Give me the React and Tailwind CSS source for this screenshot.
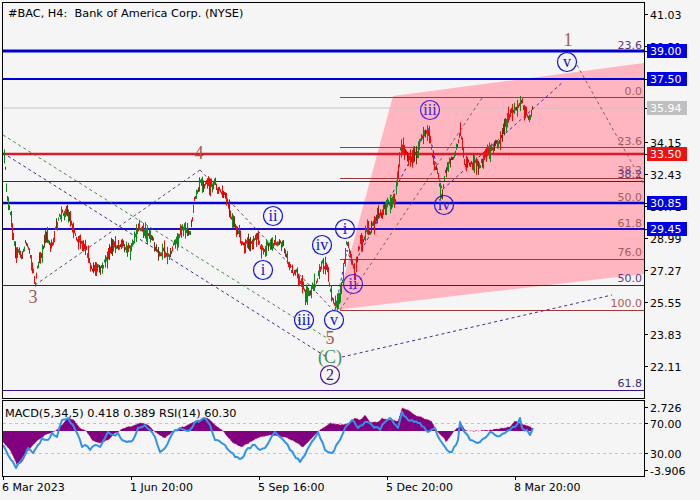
import React from 'react';

// seeded noise so the bars stay the same on every render
let seed = 12345;
const rnd = () => {
    seed = (seed * 16807) % 2147483647;
    return seed / 2147483647;
};

const pricePath = [
    [3, 145], [6, 190], [8, 205], [12, 232], [17, 250], [22, 258], [25, 240], [30, 252], [35, 284], [38, 268],
    [45, 238], [50, 245], [58, 222], [66, 208], [72, 222], [78, 236], [85, 255], [92, 268], [100, 274], [105, 262],
    [112, 250], [120, 240], [130, 250], [140, 232], [150, 232], [160, 262], [170, 250], [180, 234], [190, 224], [195, 195],
    [200, 172], [210, 184], [218, 190], [225, 198], [232, 226], [245, 250], [255, 236], [265, 250], [272, 237], [280, 242],
    [290, 266], [297, 276], [305, 300], [315, 284], [322, 262], [328, 276], [332, 305], [336, 308], [343, 275], [346, 246],
    [352, 256], [355, 266], [360, 240], [372, 228], [385, 206], [395, 196], [400, 152], [415, 156], [428, 132], [435, 166],
    [441, 190], [450, 162], [460, 130], [465, 164], [480, 166], [490, 154], [500, 136], [510, 116], [521, 102], [528, 114], [532, 110],
];

const priceAt = (x) => {
    for (let i = 1; i < pricePath.length; i++) {
        const [x0, y0] = pricePath[i - 1];
        const [x1, y1] = pricePath[i];
        if (x <= x1) return y0 + ((x - x0) / (x1 - x0)) * (y1 - y0);
    }
    return 110;
};

const bars = { red: '', green: '', dark: '' };
let wander = 0;
for (let x = 4; x <= 532; x++) {
    wander = wander * 0.7 + (rnd() - 0.5) * 9;
    const base = priceAt(x) + wander;
    const r0 = rnd();
    const h = 1.5 + r0 * r0 * 8;
    const falling = priceAt(x + 2) > priceAt(x - 2);
    const r = rnd();
    const kind = r < 0.18 ? 'dark' : (falling ? r < 0.82 : r > 0.72) ? 'red' : 'green';
    bars[kind] += `M${x + 0.5} ${(base - h).toFixed(1)}V${(base + h).toFixed(1)}`;
}

// fill in between the hand-read points with a little jitter
const roughen = (list, amount) => {
    const out = [list[0]];
    for (let i = 1; i < list.length; i++) {
        const [x0, y0] = list[i - 1];
        const [x1, y1] = list[i];
        const steps = Math.max(1, Math.floor((x1 - x0) / 2));
        for (let s = 1; s <= steps; s++) {
            const t = s / steps;
            const jitter = s === steps ? 0 : (rnd() - 0.5) * amount;
            out.push([+(x0 + (x1 - x0) * t).toFixed(1), +(y0 + (y1 - y0) * t + jitter).toFixed(1)]);
        }
    }
    return out;
};

const histPoints = roughen([
    [3, 431], [3, 442], [10, 450], [17, 465], [22, 462], [27, 452], [33, 445], [38, 440], [45, 435], [55, 431], [62, 425], [68, 418], [74, 420],
    [80, 428], [86, 431], [92, 440], [100, 443], [108, 440], [115, 433], [125, 428], [135, 425], [140, 423], [148, 425], [155, 432], [165, 438],
    [172, 432], [180, 428], [190, 424], [200, 420], [207, 418], [215, 425], [222, 430], [232, 442], [242, 447], [250, 442], [260, 437], [270, 435],
    [285, 437], [295, 442], [303, 447], [310, 440], [320, 430], [330, 423], [340, 425], [350, 423], [355, 418], [360, 420], [365, 415], [370, 422],
    [378, 422], [382, 418], [390, 420], [398, 421], [402, 408], [408, 410], [415, 415], [423, 418], [432, 422], [437, 431], [444, 438], [446, 442],
    [450, 437], [455, 430], [462, 425], [465, 430], [470, 431], [480, 431], [490, 430], [497, 429], [510, 427], [515, 421], [525, 425], [532, 428], [532, 431],
], 1.2);

const rsiPoints = roughen([
    [3, 445], [8, 455], [13, 462], [16, 468], [20, 462], [25, 455], [28, 448], [33, 453], [38, 445], [42, 438], [48, 440], [52, 433], [57, 437],
    [62, 420], [68, 418], [73, 425], [78, 435], [82, 447], [85, 445], [90, 450], [95, 445], [100, 447], [105, 438], [108, 432], [113, 435], [118, 433],
    [122, 440], [127, 442], [133, 440], [138, 428], [145, 425], [150, 430], [155, 437], [160, 452], [165, 448], [170, 438], [175, 430], [180, 428],
    [190, 430], [195, 422], [205, 418], [210, 425], [215, 440], [225, 445], [235, 457], [242, 458], [248, 448], [255, 445], [260, 450], [265, 448],
    [275, 432], [285, 442], [290, 450], [300, 462], [305, 455], [310, 445], [318, 432], [325, 450], [332, 453], [340, 440], [345, 428], [352, 420],
    [358, 428], [365, 422], [372, 425], [380, 430], [385, 422], [390, 418], [398, 428], [402, 412], [408, 420], [420, 423], [428, 432], [435, 428],
    [440, 440], [447, 450], [452, 452], [458, 440], [460, 422], [463, 430], [470, 440], [475, 442], [480, 442], [485, 438], [490, 432], [495, 435],
    [500, 436], [505, 433], [510, 430], [515, 427], [520, 418], [522, 428], [527, 430], [530, 435], [533, 428],
], 3);

const toPts = (list) => list.map((p) => p.join(',')).join(' ');

const hLines = [
    { y: 51, color: '#0000c8', w: 3 },
    { y: 79, color: '#0000d8', w: 2 },
    { y: 108, color: '#c4c4c4', w: 1 },
    { y: 154, color: '#dc1a2a', w: 2.5 },
    { y: 181.5, color: '#4b0f8c', w: 1 },
    { y: 203, color: '#0000d8', w: 2.5 },
    { y: 229, color: '#1a0fc8', w: 2 },
    { y: 285.5, color: '#4b0f8c', w: 1 },
    { y: 390.5, color: '#3a0f8c', w: 1 },
];

const fibLines = [97.5, 147.5, 178.5, 259.5, 310.5];

const fibLabels = [
    { t: '23.6', y: 49, c: '#5a3a80' },
    { t: '0.0', y: 95, c: '#a85a5a' },
    { t: '23.6', y: 145, c: '#a85a5a' },
    { t: '38.2', y: 174, c: '#a85a5a' },
    { t: '38.2', y: 178, c: '#5a3a80' },
    { t: '50.0', y: 201, c: '#a85a5a' },
    { t: '61.8', y: 227, c: '#a85a5a' },
    { t: '76.0', y: 256, c: '#a85a5a' },
    { t: '50.0', y: 282, c: '#5a3a80' },
    { t: '100.0', y: 307, c: '#a85a5a' },
    { t: '61.8', y: 387, c: '#3a2a70' },
];

const dashed = [
    { p: '3,135 330,340', c: '#2e7d32' },
    { p: '3,153 325,356', c: '#3a0f7c' },
    { p: '35,285 200,170', c: '#5a2a6a' },
    { p: '200,170 335,312', c: '#6a2a5a' },
    { p: '342,357 612,295', c: '#3a0f7c' },
    { p: '335,310 347,250 353,266 428,128 442,190 563,82', c: '#2a1ab0' },
    { p: '340,310 482,98', c: '#8a4a4a' },
    { p: '577,65 643,183', c: '#8a4a4a' },
];

const circles = [
    { t: 'ii', x: 273, y: 216, c: '#1010d8' },
    { t: 'i', x: 263, y: 270, c: '#1010d8' },
    { t: 'iii', x: 304, y: 320, c: '#1010d8' },
    { t: 'iv', x: 322, y: 245, c: '#1010d8' },
    { t: 'v', x: 334, y: 320, c: '#1010d8' },
    { t: 'i', x: 345, y: 229, c: '#1010d8' },
    { t: 'ii', x: 353, y: 284, c: '#4a20d8' },
    { t: 'iii', x: 430, y: 110, c: '#4a20d8' },
    { t: 'iv', x: 444, y: 205, c: '#2a20c8' },
    { t: 'v', x: 567, y: 62, c: '#1010d8' },
    { t: '2', x: 330, y: 375, c: '#4b0f8c' },
];

const plainLabels = [
    { t: '3', x: 33, y: 303, c: '#a05a50' },
    { t: '4', x: 199, y: 159, c: '#a05a50' },
    { t: '5', x: 330, y: 344, c: '#a05a50' },
    { t: '(C)', x: 330, y: 363, c: '#3f8f5a' },
    { t: '1', x: 568, y: 46, c: '#a05a50' },
];

const priceTicks = [
    { t: '41.03', y: 14 }, { t: '39.31', y: 46 }, { t: '34.15', y: 142 }, { t: '32.43', y: 174 }, { t: '30.71', y: 206 }, { t: '28.99', y: 238 },
    { t: '27.27', y: 270 }, { t: '25.55', y: 302 }, { t: '23.83', y: 334 }, { t: '22.11', y: 366 },
    { t: '2.726', y: 407 }, { t: '70.00', y: 423 }, { t: '30.00', y: 453 }, { t: '-3.906', y: 470 },
];

const priceTags = [
    { t: '39.00', y: 51, bg: '#0000e6' },
    { t: '37.50', y: 79, bg: '#0000e6' },
    { t: '35.94', y: 108, bg: '#c0c0c0' },
    { t: '33.50', y: 154, bg: '#ee1111' },
    { t: '30.85', y: 203, bg: '#0000e6' },
    { t: '29.45', y: 229, bg: '#0000e6' },
];

const timeLabels = ['6 Mar 2023', '1 Jun 20:00', '5 Sep 16:00', '5 Dec 20:00', '8 Mar 20:00'];

const App = () => {
    return (
        <div className="flex w-[700px] h-[500px] bg-[#f5f5f5] text-black overflow-hidden font-['DejaVu_Sans',sans-serif]">
            <div className="w-[645px] pl-[2px] pt-[2px] flex flex-col shrink-0">
                {/* main chart */}
                <div className="relative h-[397px] border border-black overflow-hidden">
                    <svg width="641" height="395" viewBox="3 3 641 395" className="block">
                        <polygon points="393,96 644,63 644,274 335,310" fill="#ffb6c1" />
                        {fibLines.map((y) => (
                            <line key={y} x1="340" x2="644" y1={y} y2={y} stroke="#a03a3a" strokeWidth="1" />
                        ))}
                        {hLines.map((l) => (
                            <line key={l.y} x1="3" x2="644" y1={l.y} y2={l.y} stroke={l.color} strokeWidth={l.w} />
                        ))}
                        {dashed.map((d) => (
                            <polyline key={d.p} points={d.p} fill="none" stroke={d.c} strokeWidth="0.9" strokeDasharray="3 3" />
                        ))}
                        <path d={bars.green} stroke="#0a8a1a" strokeWidth="1" />
                        <path d={bars.red} stroke="#e80c0c" strokeWidth="1" />
                        <path d={bars.dark} stroke="#6a3010" strokeWidth="1" />
                        {fibLabels.map((f) => (
                            <text key={f.t + f.y} x="642" y={f.y} textAnchor="end" fontSize="11" fill={f.c}>{f.t}</text>
                        ))}
                        {circles.map((c) => (
                            <g key={c.t + c.x}>
                                <circle cx={c.x} cy={c.y} r="9.5" fill="none" stroke={c.c} strokeWidth="1.2" />
                                <text x={c.x} y={c.y + 5} textAnchor="middle" fontSize="16" fill={c.c} fontFamily="Liberation Serif, serif">{c.t}</text>
                            </g>
                        ))}
                        {plainLabels.map((l) => (
                            <text key={l.t} x={l.x} y={l.y} textAnchor="middle" fontSize="18" fill={l.c} fontFamily="Liberation Serif, serif">{l.t}</text>
                        ))}
                    </svg>
                    <div className="absolute left-[5px] top-[1px] text-[11.3px] leading-[19px] whitespace-pre">#BAC, H4:  Bank of America Corp. (NYSE)</div>
                </div>
                {/* macd + rsi */}
                <div className="relative h-[77px] mt-[1px] border border-black overflow-hidden">
                    <svg width="641" height="75" viewBox="3 401 641 75" className="block">
                        <line x1="3" x2="644" y1="423.5" y2="423.5" stroke="#c4c4c4" strokeDasharray="3 3" />
                        <line x1="3" x2="644" y1="453.5" y2="453.5" stroke="#c4c4c4" strokeDasharray="3 3" />
                        <polygon points={toPts(histPoints)} fill="#800080" />
                        <polyline points={toPts(histPoints)} fill="none" stroke="#e01030" strokeWidth="0.8" strokeDasharray="1 2" />
                        <polyline points={toPts(rsiPoints)} fill="none" stroke="#2f93ea" strokeWidth="2" strokeLinejoin="round" />
                    </svg>
                    <div className="absolute left-[2px] top-[3px] text-[11.3px] leading-[19px] whitespace-pre">MACD(5,34,5) 0.418 0.389 RSI(14) 60.30</div>
                </div>
                {/* time axis */}
                <div className="grid grid-cols-[128px_128px_128px_128px_1fr] text-[11px] leading-[15px]">
                    {timeLabels.map((t) => (
                        <div key={t} className="flex flex-col items-start">
                            <div className="w-px h-[3px] bg-black ml-px" />
                            <span className="whitespace-nowrap">{t}</span>
                        </div>
                    ))}
                </div>
            </div>
            {/* price axis */}
            <svg width="55" height="500" className="block shrink-0">
                {priceTicks.map((p) => (
                    <g key={p.t}>
                        <line x1="0" x2="3" y1={p.y + 0.5} y2={p.y + 0.5} stroke="#000" />
                        <text x="5" y={p.y + 5} fontSize="11" fill="#000">{p.t}</text>
                    </g>
                ))}
                {priceTags.map((p) => (
                    <g key={p.t}>
                        <line x1="0" x2="3" y1={p.y + 0.5} y2={p.y + 0.5} stroke="#000" />
                        <rect x="2" y={p.y - 7} width="40" height="14" fill={p.bg} />
                        <text x="5" y={p.y + 4} fontSize="11" fill="#fff">{p.t}</text>
                    </g>
                ))}
            </svg>
        </div>
    );
};

export default App;
